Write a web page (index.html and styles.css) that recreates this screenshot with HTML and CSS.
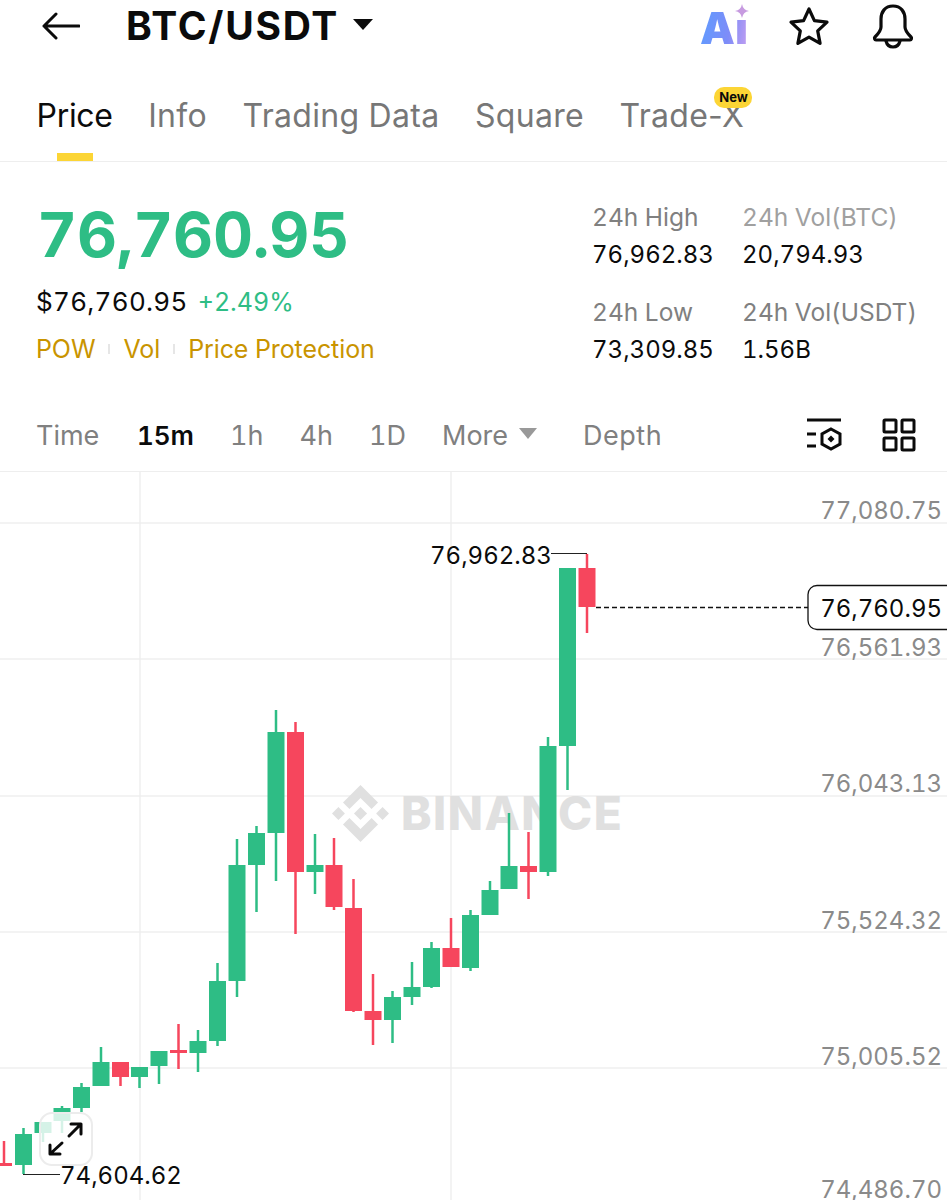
FILE: index.html
```html
<!DOCTYPE html>
<html lang="en">
<head>
  <meta charset="UTF-8" />
  <meta name="viewport" content="width=device-width, initial-scale=1.0"/>
  <title>BTC/USDT</title>
  <link rel="stylesheet" href="styles.css">
</head>
<body>
  <header class="top-bar">
    <svg class="back-icon" width="38" height="28" viewBox="0 0 38 28">
      <path d="M37 14H2M14 2L2 14l12 12"/>
    </svg>
    <h1 class="pair">BTC/USDT</h1>
    <span class="pair-caret"></span>
    <div class="top-actions">
      <div class="ai-badge">
        <span class="ai-text">Ai</span>
        <svg class="ai-spark" width="14" height="14" viewBox="0 0 14 14">
          <path d="M7 0q1 6 7 7q-6 1-7 7q-1-6-7-7q6-1 7-7z"/>
        </svg>
      </div>
      <svg class="line-icon star-icon" width="42" height="40" viewBox="0 0 42 40">
        <path d="M21 3l5.400 11.600 12.600 1.600-9.300 8.700 2.400 12.500L21 31.200 9.900 37.400l2.400-12.500L3 16.200l12.600-1.600z"/>
      </svg>
      <svg class="line-icon bell-icon" width="42" height="46" viewBox="0 0 42 46">
        <path d="M21 3c-8 0-12 6-12 13v8c0 4-3 7-6 10-1 1-.5 3 1 3h34c1.500 0 2-2 1-3-3-3-6-6-6-10v-8c0-7-4-13-12-13z"/>
        <path d="M14 38c1 4 4 6 7 6s6-2 7-6"/>
      </svg>
    </div>
  </header>

  <nav class="tabs">
    <a class="tab tab-active">Price</a>
    <a class="tab">Info</a>
    <a class="tab">Trading Data</a>
    <a class="tab">Square</a>
    <a class="tab tab-new">Trade-X<span class="new-badge">New</span></a>
  </nav>

  <section class="summary">
    <div class="summary-left">
      <div class="last-price">76,760.95</div>
      <div class="fiat-row">
        <span class="fiat">$76,760.95</span>
        <span class="change">+2.49%</span>
      </div>
      <div class="tags">
        <span>POW</span><i class="tag-sep"></i>
        <span>Vol</span><i class="tag-sep"></i>
        <span>Price Protection</span>
      </div>
    </div>
    <div class="stats">
      <div class="stat"><span class="stat-label">24h High</span><span class="stat-value">76,962.83</span></div>
      <div class="stat"><span class="stat-label stat-label-light">24h Vol(BTC)</span><span class="stat-value">20,794.93</span></div>
      <div class="stat"><span class="stat-label">24h Low</span><span class="stat-value">73,309.85</span></div>
      <div class="stat"><span class="stat-label">24h Vol(USDT)</span><span class="stat-value">1.56B</span></div>
    </div>
  </section>

  <div class="intervals">
    <span>Time</span>
    <span class="interval-active">15m</span>
    <span>1h</span>
    <span>4h</span>
    <span>1D</span>
    <span class="interval-more">More<i class="more-caret"></i></span>
    <span class="interval-depth">Depth</span>
    <div class="interval-icons">
      <svg class="tool-icon" width="36" height="34" viewBox="0 0 36 34">
        <path d="M1 2h34M1 16h9M1 28h9"/>
        <path d="M25 11l9 5v10l-9 5-9-5V16z"/>
        <path class="tool-dot" d="M25 17.500l3.500 3.500-3.500 3.500-3.500-3.500z"/>
      </svg>
      <svg class="tool-icon" width="34" height="34" viewBox="0 0 34 34">
        <rect x="2" y="2" width="12" height="12" rx="1"/>
        <rect x="20" y="2" width="12" height="12" rx="1"/>
        <rect x="2" y="20" width="12" height="12" rx="1"/>
        <rect x="20" y="20" width="12" height="12" rx="1"/>
      </svg>
    </div>
  </div>

  <div class="chart">
    <svg class="chart-svg" width="947" height="728" viewBox="0 472 947 728">
      <!-- grid -->
      <path class="grid" d="M0 523H947M0 659H947M0 796H947M0 932H947M0 1068H947M140 472V1200M451 472V1200"/>

      <!-- watermark -->
      <svg x="332" y="785" width="57" height="57" viewBox="0 0 126.610 126.610">
        <path class="mark" d="M38.730 53.200l24.590-24.580 24.600 24.600 14.300-14.310L63.320 0 24.420 38.900l14.310 14.300zM0 63.310l14.310-14.300 14.300 14.300-14.300 14.310zM38.730 73.410l24.590 24.590 24.600-24.600 14.310 14.290-38.900 38.910-38.910-38.880-.02-.02zM98 63.310l14.300-14.300 14.310 14.300-14.300 14.310zM77.830 63.300L63.320 48.780 48.810 63.280l14.510 14.520 14.510-14.500z"/>
      </svg>
      <text class="mark-text" x="401" y="830">BINANCE</text>

      <!-- candles, oldest first -->
      <g class="down"><line x1="4" x2="4" y1="1141" y2="1166"/><rect x="-5" y="1163" width="17" height="3"/></g>
      <g class="up"><line x1="23.500" x2="23.500" y1="1128" y2="1174"/><rect x="15" y="1134" width="17" height="31"/></g>
      <g class="up"><line x1="43" x2="43" y1="1122" y2="1142"/><rect x="34.500" y="1122" width="17" height="11"/></g>
      <g class="up"><line x1="62" x2="62" y1="1106" y2="1133"/><rect x="53.500" y="1108" width="17" height="13"/></g>
      <g class="up"><line x1="81.500" x2="81.500" y1="1083" y2="1112"/><rect x="73" y="1087" width="17" height="21"/></g>
      <g class="up"><line x1="101" x2="101" y1="1047" y2="1086"/><rect x="92.500" y="1062" width="17" height="24"/></g>
      <g class="down"><line x1="120.500" x2="120.500" y1="1062" y2="1086"/><rect x="112" y="1062" width="17" height="15"/></g>
      <g class="up"><line x1="139.500" x2="139.500" y1="1067" y2="1088"/><rect x="131" y="1067" width="17" height="10"/></g>
      <g class="up"><line x1="159" x2="159" y1="1051" y2="1084"/><rect x="150.500" y="1051" width="17" height="15"/></g>
      <g class="down"><line x1="178.500" x2="178.500" y1="1024" y2="1069"/><rect x="170" y="1050" width="17" height="3"/></g>
      <g class="up"><line x1="198" x2="198" y1="1030" y2="1072"/><rect x="189.500" y="1041" width="17" height="12"/></g>
      <g class="up"><line x1="217.500" x2="217.500" y1="963" y2="1046"/><rect x="209" y="981" width="17" height="60"/></g>
      <g class="up"><line x1="237" x2="237" y1="839" y2="997"/><rect x="228.500" y="865" width="17" height="116"/></g>
      <g class="up"><line x1="256.500" x2="256.500" y1="826" y2="912"/><rect x="248" y="833" width="17" height="32"/></g>
      <g class="up"><line x1="276" x2="276" y1="710" y2="881"/><rect x="267.500" y="732" width="17" height="101"/></g>
      <g class="down"><line x1="295.500" x2="295.500" y1="722" y2="934"/><rect x="287" y="732" width="17" height="140"/></g>
      <g class="up"><line x1="315" x2="315" y1="834" y2="894"/><rect x="306.500" y="865" width="17" height="7"/></g>
      <g class="down"><line x1="334" x2="334" y1="838" y2="910"/><rect x="325.500" y="865" width="17" height="42"/></g>
      <g class="down"><line x1="353.500" x2="353.500" y1="879" y2="1012"/><rect x="345" y="908" width="17" height="103"/></g>
      <g class="down"><line x1="373" x2="373" y1="974" y2="1045"/><rect x="364.500" y="1011" width="17" height="9"/></g>
      <g class="up"><line x1="392.500" x2="392.500" y1="991" y2="1043"/><rect x="384" y="997" width="17" height="23"/></g>
      <g class="up"><line x1="412" x2="412" y1="962" y2="1005"/><rect x="403.500" y="987" width="17" height="10"/></g>
      <g class="up"><line x1="431.500" x2="431.500" y1="942" y2="988"/><rect x="423" y="948" width="17" height="39"/></g>
      <g class="down"><line x1="451" x2="451" y1="918" y2="967"/><rect x="442.500" y="948" width="17" height="19"/></g>
      <g class="up"><line x1="470.500" x2="470.500" y1="910" y2="971"/><rect x="462" y="915" width="17" height="53"/></g>
      <g class="up"><line x1="490" x2="490" y1="881" y2="915"/><rect x="481.500" y="890" width="17" height="25"/></g>
      <g class="up"><line x1="509" x2="509" y1="813" y2="889"/><rect x="500.500" y="866" width="17" height="23"/></g>
      <g class="down"><line x1="528.500" x2="528.500" y1="832" y2="899"/><rect x="520" y="866" width="17" height="6"/></g>
      <g class="up"><line x1="548" x2="548" y1="737" y2="876"/><rect x="539.500" y="746" width="17" height="126"/></g>
      <g class="up"><line x1="567.500" x2="567.500" y1="568" y2="790"/><rect x="559" y="568" width="17" height="178"/></g>
      <g class="down"><line x1="587" x2="587" y1="554" y2="633"/><rect x="578.500" y="568" width="17" height="39"/></g>

      <!-- high / low markers -->
      <path class="leader" d="M551 553.500H587M23 1174.500H60"/>
      <text class="marker" x="430" y="564">76,962.83</text>
      <text class="marker" x="60" y="1184">74,604.62</text>

      <!-- price axis -->
      <text class="axis" x="942" y="519">77,080.75</text>
      <text class="axis" x="942" y="656">76,561.93</text>
      <text class="axis" x="942" y="792">76,043.13</text>
      <text class="axis" x="942" y="929">75,524.32</text>
      <text class="axis" x="942" y="1065">75,005.52</text>
      <text class="axis" x="942" y="1198">74,486.70</text>

      <!-- last price -->
      <path class="last-line" d="M596 607.500H808"/>
      <rect class="last-box" x="808" y="585.500" width="150" height="44" rx="9"/>
      <text class="last-text" x="942" y="617">76,760.95</text>

      <!-- expand -->
      <rect class="expand-box" x="40" y="1113" width="52" height="52" rx="12"/>
      <path class="expand-arrow" d="M69 1136l12-12M71 1124h10v10M62 1143l-12 11M50 1145v9h10"/>
    </svg>
  </div>
</body>
</html>
```

FILE: styles.css
```css
* {
  box-sizing: border-box;
}

html, body {
  margin: 0;
  height: 1200px;
  overflow: hidden;
}

body {
  font-family: Inter, "Open Sans", sans-serif;
  font-variant-numeric: tabular-nums;
  background-color: #ffffff;
  color: #0b0b0b;
}

/* top bar */
.top-bar {
  display: flex;
  align-items: center;
  height: 52px;
  padding-left: 42px;
}
.back-icon path {
  fill: none;
  stroke: #0b0b0b;
  stroke-width: 3;
  stroke-linecap: round;
  stroke-linejoin: round;
}
.pair {
  margin: 0 0 0 46px;
  font-size: 39px;
  font-weight: 700;
  line-height: 52px;
  letter-spacing: 1.700px;
}
.pair-caret {
  margin-left: 14px;
  margin-top: -4px;
  border-left: 10px solid transparent;
  border-right: 10px solid transparent;
  border-top: 11px solid #0b0b0b;
}
.top-actions {
  display: flex;
  align-items: center;
  margin-left: auto;
  padding-right: 33px;
}
.ai-badge {
  position: relative;
  width: 48px;
  height: 44px;
  margin-right: 40px;
}
.ai-text {
  font-size: 44px;
  font-weight: 900;
  line-height: 48px;
  background: linear-gradient(100deg, #5c9dff 0%, #7e8cf8 60%, #c8a0f0 100%);
  -webkit-background-clip: text;
  background-clip: text;
  color: transparent;
}
.ai-spark {
  position: absolute;
  top: 0;
  right: -1px;
  background-color: #ffffff;
}
.ai-spark path {
  fill: #c79be0;
}
.line-icon path {
  fill: none;
  stroke: #0b0b0b;
  stroke-width: 3.200;
  stroke-linejoin: round;
  stroke-linecap: round;
}
.star-icon {
  margin-right: 42px;
}

/* tabs */
.tabs {
  display: flex;
  gap: 35.500px;
  height: 110px;
  padding: 42px 0 0 36.500px;
  border-bottom: 1px solid #eeeeee;
  font-variant-numeric: normal;
}
.tab {
  position: relative;
  font-size: 32px;
  line-height: 44px;
  letter-spacing: 0.300px;
  color: #777777;
}
.tab-active {
  letter-spacing: -0.300px;
  color: #0b0b0b;
}
.tab-active::after {
  content: "";
  position: absolute;
  left: 20px;
  top: 59px;
  width: 36px;
  height: 8px;
  background-color: #fcd535;
}
.new-badge {
  position: absolute;
  left: 95px;
  top: -7px;
  width: 38px;
  height: 21px;
  border-radius: 10px;
  background-color: #fcd535;
  color: #0b0b0b;
  font-size: 13px;
  font-weight: 700;
  line-height: 21px;
  letter-spacing: 0;
  text-align: center;
}

/* price summary */
.summary {
  display: flex;
  justify-content: space-between;
  height: 239px;
  padding: 0 0 0 37px;
}
.last-price {
  margin-top: 33px;
  font-size: 62px;
  font-weight: 700;
  line-height: 80px;
  letter-spacing: -0.200px;
  color: #2ebd85;
}
.fiat-row {
  display: flex;
  gap: 10px;
  margin: 10px 0 0 -1px;
  font-size: 25px;
  line-height: 34px;
}
.fiat {
  font-size: 26px;
  letter-spacing: 0.300px;
}
.change {
  color: #2ebd85;
}
.tags {
  display: flex;
  align-items: center;
  margin: 13px 0 0 -1px;
  font-size: 25px;
  line-height: 34px;
  letter-spacing: -0.100px;
  color: #c99400;
}
.tag-sep {
  width: 2px;
  height: 10px;
  margin: 0 13px;
  background-color: #e6e6e6;
}
.stats {
  display: grid;
  grid-template-columns: 150px 205px;
  grid-auto-rows: 95px;
  margin-top: 40px;
}
.stat {
  display: flex;
  flex-direction: column;
  gap: 6px;
  font-size: 24.500px;
  line-height: 31px;
}
.stat-value {
  font-size: 24px;
}
.stat-label {
  color: #808080;
}
.stat-label-light {
  color: #a0a0a0;
}

/* intervals */
.intervals {
  display: flex;
  align-items: center;
  gap: 36px;
  height: 71px;
  padding: 0 0 2px 36px;
  border-bottom: 1px solid #eeeeee;
  font-size: 27px;
  color: #808080;
}
.interval-active {
  margin-left: 1.600px;
  font-size: 26px;
  font-weight: 600;
  color: #0b0b0b;
}
.interval-more {
  display: flex;
  align-items: center;
}
.more-caret {
  margin: -4px 0 0 11px;
  border-left: 9px solid transparent;
  border-right: 9px solid transparent;
  border-top: 11px solid #999999;
}
.interval-depth {
  margin-left: 10px;
  letter-spacing: 0.500px;
}
.interval-icons {
  display: flex;
  gap: 40px;
  margin-left: auto;
  padding-right: 31px;
}
.tool-icon path,
.tool-icon rect {
  fill: none;
  stroke: #0b0b0b;
  stroke-width: 3;
}
.tool-icon .tool-dot {
  fill: #0b0b0b;
  stroke: none;
}

/* chart */
.chart {
  height: 728px;
}
.chart-svg {
  display: block;
  font-family: Inter, "Open Sans", sans-serif;
  font-variant-numeric: tabular-nums;
}
.grid {
  fill: none;
  stroke: #efefef;
  stroke-width: 1.500;
}
.mark {
  fill: #e0e0e0;
}
.mark-text {
  font-size: 46px;
  font-weight: 800;
  letter-spacing: 1.500px;
  fill: #e0e0e0;
}
.up rect {
  fill: #2ebd85;
}
.up line {
  stroke: #2ebd85;
  stroke-width: 2.500;
}
.down rect {
  fill: #f6465d;
}
.down line {
  stroke: #f6465d;
  stroke-width: 2.500;
}
.leader {
  fill: none;
  stroke: #222222;
  stroke-width: 1.200;
}
.marker {
  font-size: 24px;
  fill: #0b0b0b;
}
.axis {
  font-size: 24px;
  fill: #8a8a8a;
  text-anchor: end;
}
.last-line {
  fill: none;
  stroke: #111111;
  stroke-width: 1.300;
  stroke-dasharray: 5 3;
}
.last-box {
  fill: #ffffff;
  stroke: #111111;
  stroke-width: 1.300;
}
.last-text {
  font-size: 24px;
  fill: #0b0b0b;
  text-anchor: end;
}
.expand-box {
  fill: rgba(255, 255, 255, 0.8);
  stroke: #ececec;
  stroke-width: 2;
}
.expand-arrow {
  fill: none;
  stroke: #0b0b0b;
  stroke-width: 3;
  stroke-linecap: round;
  stroke-linejoin: round;
}
```
